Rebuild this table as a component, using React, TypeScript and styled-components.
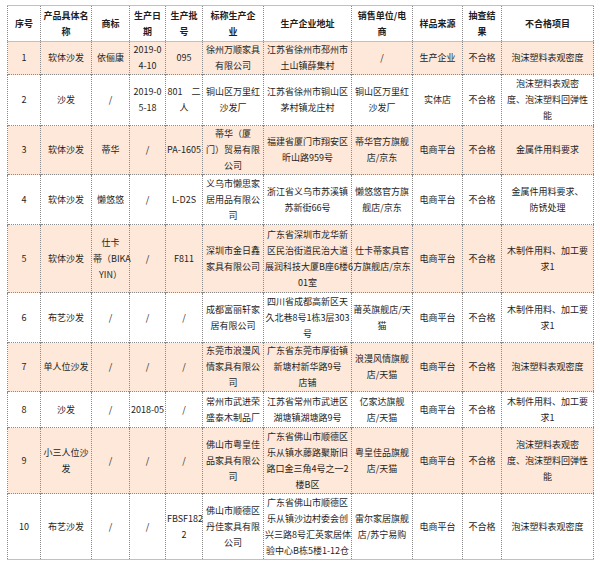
import React from 'react';
import styled, { createGlobalStyle } from 'styled-components';

const GlobalStyle = createGlobalStyle`
  body {
    margin: 0;
    background: #ffffff;
  }
`;

const colWidths = [33, 51, 38, 36, 37, 61, 88, 61, 50, 39, 92];

const headers = [
  '序号',
  '产品具体名\n称',
  '商标',
  '生产日\n期',
  '生产批\n号',
  '标称生产企\n业',
  '生产企业地址',
  '销售单位/电\n商',
  '样品来源',
  '抽查结\n果',
  '不合格项目',
];

interface RowData {
  height: number;
  cells: string[];
}

const rows: RowData[] = [
  {
    height: 31,
    cells: ['1', '软体沙发', '依俪康', '2019-0\n4-10', '095', '徐州万顺家具\n有限公司', '江苏省徐州市邳州市\n土山镇薛集村', '/', '生产企业', '不合格', '泡沫塑料表观密度'],
  },
  {
    height: 51,
    cells: ['2', '沙发', '/', '2019-0\n5-18', '801\u3000二\n人', '铜山区万里红\n沙发厂', '江苏省徐州市铜山区\n茅村镇龙庄村', '铜山区万里红\n沙发厂', '实体店', '不合格', '泡沫塑料表观密\n度、泡沫塑料回弹性\n能'],
  },
  {
    height: 49,
    cells: ['3', '软体沙发', '蒂华', '/', 'PA-1605', '蒂华（厦\n门）贸易有限\n公司', '福建省厦门市翔安区\n昕山路959号', '蒂华官方旗舰\n店/京东', '电商平台', '不合格', '金属件用料要求'],
  },
  {
    height: 50,
    cells: ['4', '软体沙发', '懒悠悠', '/', 'L-D2S', '义乌市懒思家\n居用品有限公\n司', '浙江省义乌市苏溪镇\n苏新街66号', '懒悠悠官方旗\n舰店/京东', '电商平台', '不合格', '金属件用料要求、\n防锈处理'],
  },
  {
    height: 68,
    cells: ['5', '软体沙发', '仕卡\n蒂（BIKA\nYIN）', '/', 'F811', '深圳市金日鑫\n家具有限公司', '广东省深圳市龙华新\n区民治街道民治大道\n展润科技大厦B座6楼6\n01室', '仕卡蒂家具官\n方旗舰店/京东', '电商平台', '不合格', '木制件用料、加工要\n求1'],
  },
  {
    height: 50,
    cells: ['6', '布艺沙发', '/', '/', '/', '成都富丽轩家\n居有限公司', '四川省成都高新区天\n久北巷8号1栋3层303\n号', '莆英旗舰店/天\n猫', '电商平台', '不合格', '木制件用料、加工要\n求1'],
  },
  {
    height: 49,
    cells: ['7', '单人位沙发', '/', '/', '/', '东莞市浪漫风\n情家具有限公\n司', '广东省东莞市厚街镇\n新塘村新华路9号\n店铺', '浪漫风情旗舰\n店/天猫', '电商平台', '不合格', '泡沫塑料表观密度'],
  },
  {
    height: 36,
    cells: ['8', '沙发', '/', '2018-05', '/', '常州市武进荣\n盛泰木制品厂', '江苏省常州市武进区\n湖塘镇湖塘路9号', '亿家达旗舰\n店/天猫', '电商平台', '不合格', '木制件用料、加工要\n求1'],
  },
  {
    height: 66,
    cells: ['9', '小三人位沙\n发', '/', '/', '/', '佛山市粤皇佳\n品家具有限公\n司', '广东省佛山市顺德区\n乐从镇水藤路聚斯旧\n路口金三角4号之一2\n楼B区', '粤皇佳品旗舰\n店/天猫', '电商平台', '不合格', '泡沫塑料表观密\n度、泡沫塑料回弹性\n能'],
  },
  {
    height: 66,
    cells: ['10', '布艺沙发', '/', '/', 'FBSF182\n2', '佛山市顺德区\n丹佳家具有限\n公司', '广东省佛山市顺德区\n乐从镇沙边村委会创\n兴三路8号汇英家居体\n验中心B栋5楼1-12仓', '雷尔家居旗舰\n店/苏宁易购', '电商平台', '不合格', '泡沫塑料表观密度'],
  },
];

const Page = styled.div`
  padding: 5px 7px;
  font-family: 'Noto Sans CJK SC', 'Liberation Sans', sans-serif;
  color: #1e1e1e;
`;

const Table = styled.table`
  width: 587px;
  table-layout: fixed;
  border-collapse: collapse;
  font-size: 9px;
  line-height: 16px;
  border-left: 1px dotted #8a8a8a;
  border-right: 1px dotted #8a8a8a;
  border-top: 1px solid #f4b183;
  border-bottom: 1px solid #f4b183;
`;

const HeadRow = styled.tr`
  height: 36px;
  background: #ffffff;
  border-bottom: 1px solid #f4b183;
`;

const BodyRow = styled.tr<{ $shaded: boolean }>`
  background: ${(p) => (p.$shaded ? '#fde8d9' : '#ffffff')};
  border-bottom: 1px dotted #8a8a8a;

  &:last-child {
    border-bottom: 1px solid #f4b183;
  }
`;

const HeadCell = styled.th`
  padding: 0 1px;
  font-weight: 700;
  text-align: center;
  vertical-align: middle;
  white-space: pre;
  border-left: 1px dotted #8a8a8a;
  overflow: visible;
`;

const Cell = styled.td`
  padding: 0 1px;
  text-align: center;
  vertical-align: middle;
  white-space: pre;
  border-left: 1px dotted #8a8a8a;
  overflow: visible;
`;

export default function App() {
  return (
    <>
      <GlobalStyle />
      <Page>
        <Table>
          <colgroup>
            {colWidths.map((w, i) => (
              <col key={i} style={{ width: w }} />
            ))}
          </colgroup>
          <thead>
            <HeadRow>
              {headers.map((h) => (
                <HeadCell key={h}>{h}</HeadCell>
              ))}
            </HeadRow>
          </thead>
          <tbody>
            {rows.map((row, i) => (
              <BodyRow key={i} $shaded={i % 2 === 0} style={{ height: row.height }}>
                {row.cells.map((c, j) => (
                  <Cell key={j}>{c}</Cell>
                ))}
              </BodyRow>
            ))}
          </tbody>
        </Table>
      </Page>
    </>
  );
}
